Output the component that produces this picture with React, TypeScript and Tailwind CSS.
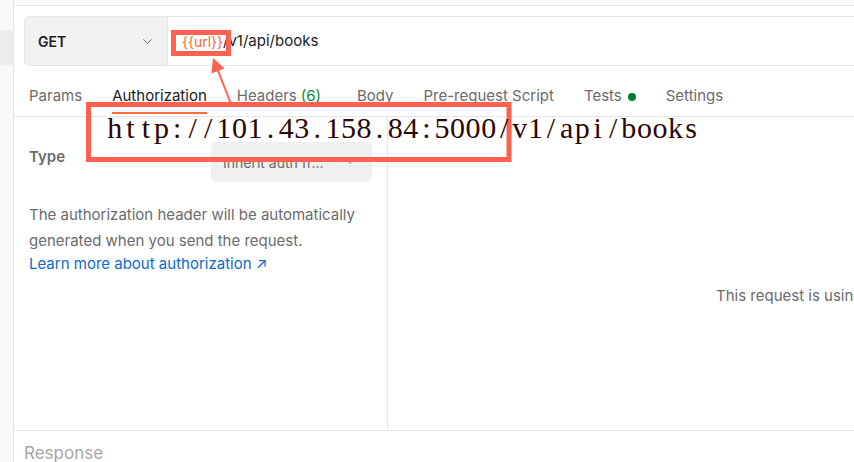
import { ChevronDown } from 'lucide-react';

const tabs = [
  { label: 'Params' },
  { label: 'Authorization', active: true },
  { label: 'Headers', count: '(6)' },
  { label: 'Body' },
  { label: 'Pre-request Script' },
  { label: 'Tests', dot: true },
  { label: 'Settings' },
];

const pasted = 'http://101.43.158.84:5000/v1/api/books';

function Annotations() {
  return (
    <>
      <svg className="pointer-events-none absolute left-0 top-0" width="854" height="462">
        <rect x="173.5" y="32.5" width="55" height="21" fill="none" stroke="#fd6150" strokeWidth="5" />
        <rect x="88.5" y="104.5" width="420.5" height="55" fill="none" stroke="#fd6150" strokeWidth="5" />
        <line x1="231" y1="104" x2="217" y2="68" stroke="#fd6150" strokeWidth="2" />
        <polygon points="213,58 224.5,68.6 211.4,73.6" fill="#fd6150" />
      </svg>
      <div className="pointer-events-none absolute left-[107px] top-[113px] flex font-['Liberation_Serif',serif] text-[30px] leading-[30px] text-[#2b0606]">
        {pasted.split('').map((ch, i) => (
          <span key={i} className="w-[15.58px] text-center">
            {ch}
          </span>
        ))}
      </div>
    </>
  );
}

export default function App() {
  return (
    <div className="relative flex h-[462px] w-[854px] overflow-hidden bg-white font-['Inter',sans-serif] text-[15px]">
      <div className="flex w-[14px] shrink-0 flex-col border-r border-[#e6e6e6] bg-[#f9f9f9]">
        <div className="h-[30px]" />
        <div className="h-[35px] bg-[#ededed]" />
      </div>

      <div className="flex min-w-0 flex-1 flex-col">
        <div className="h-[6px] shrink-0 border-b border-[#e6e6e6]" />

        <div className="flex shrink-0 pl-[10px] pt-[10px]">
          <div className="flex h-[50px] w-[144px] shrink-0 items-center justify-between rounded-l-[5px] border border-[#e6e6e6] bg-[#f2f2f2] pl-[13px] pr-[12px]">
            <span className="text-[14px] font-semibold text-[#212121]">GET</span>
            <ChevronDown size={15} strokeWidth={1.5} className="text-[#6b6b6b]" />
          </div>
          <div className="flex h-[50px] w-[800px] shrink-0 items-center border-y border-[#e6e6e6] bg-white pl-[14px] text-[#212121]">
            <span className="text-[14px] text-[#f26b3a]">{'{{url}}'}</span>
            <span>/v1/api/books</span>
          </div>
        </div>

        <div className="flex h-[51px] shrink-0 gap-[30px] border-b border-[#e6e6e6] px-[15px]">
          {tabs.map((t) => (
            <div
              key={t.label}
              className={
                t.active
                  ? 'flex h-[48px] items-start whitespace-nowrap border-b-2 border-[#ff6c37] pt-[20px] leading-[20px] text-[#212121]'
                  : 'flex h-[48px] items-start whitespace-nowrap border-b-2 border-transparent pt-[20px] leading-[20px] text-[#6b6b6b]'
              }
            >
              {t.label}
              {t.count && <span className="ml-[4px] mr-[6px] text-[#0b8a3e]">{t.count}</span>}
              {t.dot && <span className="ml-[6px] mt-[7px] h-[8px] w-[8px] rounded-full bg-[#007f31]" />}
            </div>
          ))}
        </div>

        <div className="flex h-[313px] shrink-0">
          <div className="w-[374px] shrink-0 border-r border-[#e6e6e6] px-[15px] pt-[25px]">
            <div className="flex items-start justify-between">
              <span className="pt-[5px] font-semibold leading-[20px] text-[#6b6b6b]">Type</span>
              <div className="flex h-[40px] w-[161px] items-center justify-between rounded-[5px] bg-[#f0f0f0] pl-[12px] pr-[16px] text-[#6b6b6b]">
                <span className="text-[14px]">Inherit auth fr...</span>
                <ChevronDown size={12} strokeWidth={1.5} />
              </div>
            </div>
            <p className="mt-[20px] leading-[26px] text-[#6b6b6b]">
              The authorization header will be automatically generated when you send the request.
            </p>
            <p className="leading-[20px] text-[#0b6bcb]">Learn more about authorization ↗</p>
          </div>
          <div className="min-w-0 flex-1 pl-[328px] pt-[168px]">
            <span className="whitespace-nowrap leading-[20px] text-[#6b6b6b]">
              This request is using an authorization helper from collection
            </span>
          </div>
        </div>

        <div className="flex-1 border-t border-[#e6e6e6] pl-[10px] pt-[11px]">
          <span className="text-[17px] leading-[22px] text-[#a6a6a6]">Response</span>
        </div>
      </div>

      <Annotations />
    </div>
  );
}
